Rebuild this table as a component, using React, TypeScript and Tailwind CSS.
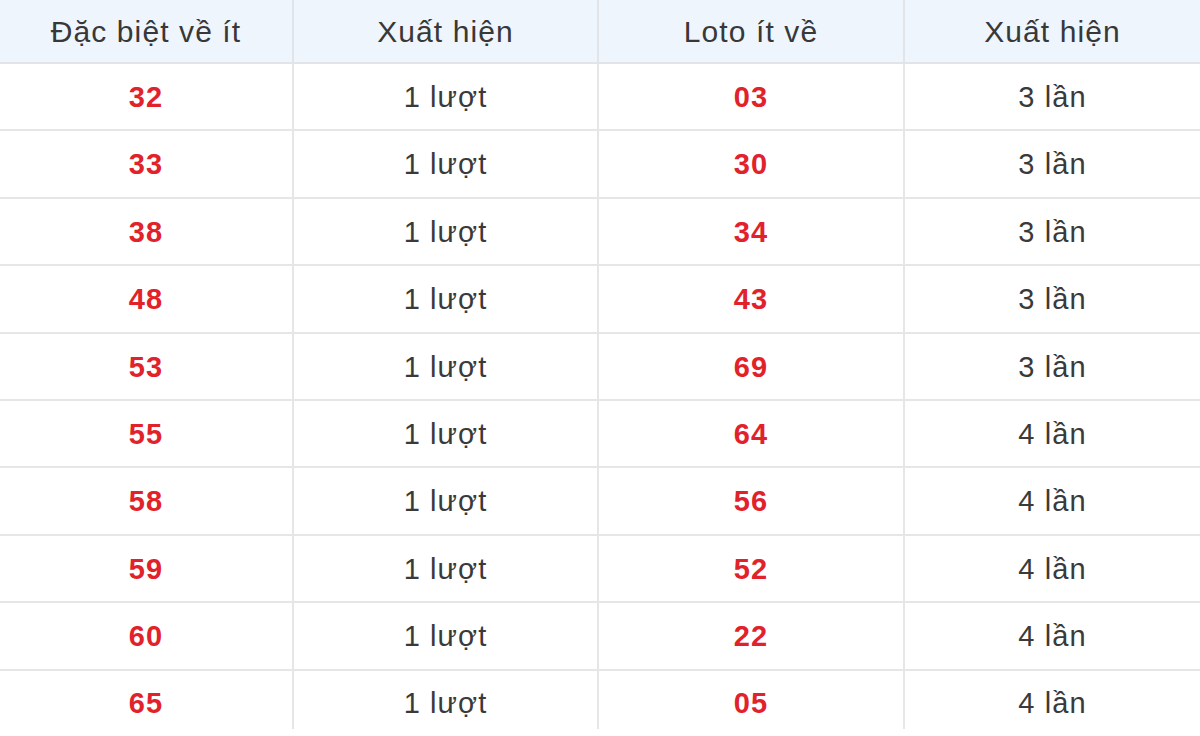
const rows: [string, string, string, string][] = [
  ["32", "1 lượt", "03", "3 lần"],
  ["33", "1 lượt", "30", "3 lần"],
  ["38", "1 lượt", "34", "3 lần"],
  ["48", "1 lượt", "43", "3 lần"],
  ["53", "1 lượt", "69", "3 lần"],
  ["55", "1 lượt", "64", "4 lần"],
  ["58", "1 lượt", "56", "4 lần"],
  ["59", "1 lượt", "52", "4 lần"],
  ["60", "1 lượt", "22", "4 lần"],
  ["65", "1 lượt", "05", "4 lần"],
];

const headers = ["Đặc biệt về ít", "Xuất hiện", "Loto ít về", "Xuất hiện"];

const cols = "grid grid-cols-[294px_305px_306px_1fr]";

export default function App() {
  return (
    <div
      className="w-[1200px] h-[736px] bg-white overflow-hidden"
      style={{ fontFamily: '"Liberation Sans", Arial, sans-serif' }}
    >
      <div className="h-[729px] overflow-hidden">
        <div className={`${cols} h-[64px] bg-[#eef5fd] border-b-2 border-[#e1e4e8]`}>
          {headers.map((h, i) => (
            <div
              key={i}
              className={`flex items-center justify-center pt-px text-[30px] tracking-[1.1px] text-[#383838] ${i < 3 ? "border-r-2 border-[#e1e4e8]" : ""}`}
            >
              {h}
            </div>
          ))}
        </div>
        {rows.map((r, idx) => (
          <div key={idx} className={`${cols} h-[67.4px] border-b-2 border-[#e6e6e6]`}>
            {r.map((c, i) => (
              <div
                key={i}
                className={`flex items-center justify-center pt-0.5 ${i < 3 ? "border-r-2 border-[#e6e6e6]" : ""} ${
                  i % 2 === 0
                    ? "text-[29px] tracking-[1px] font-bold text-[#e2222b]"
                    : "text-[29px] tracking-[1.1px] text-[#3a3a3a]"
                }`}
              >
                {c}
              </div>
            ))}
          </div>
        ))}
      </div>
    </div>
  );
}
